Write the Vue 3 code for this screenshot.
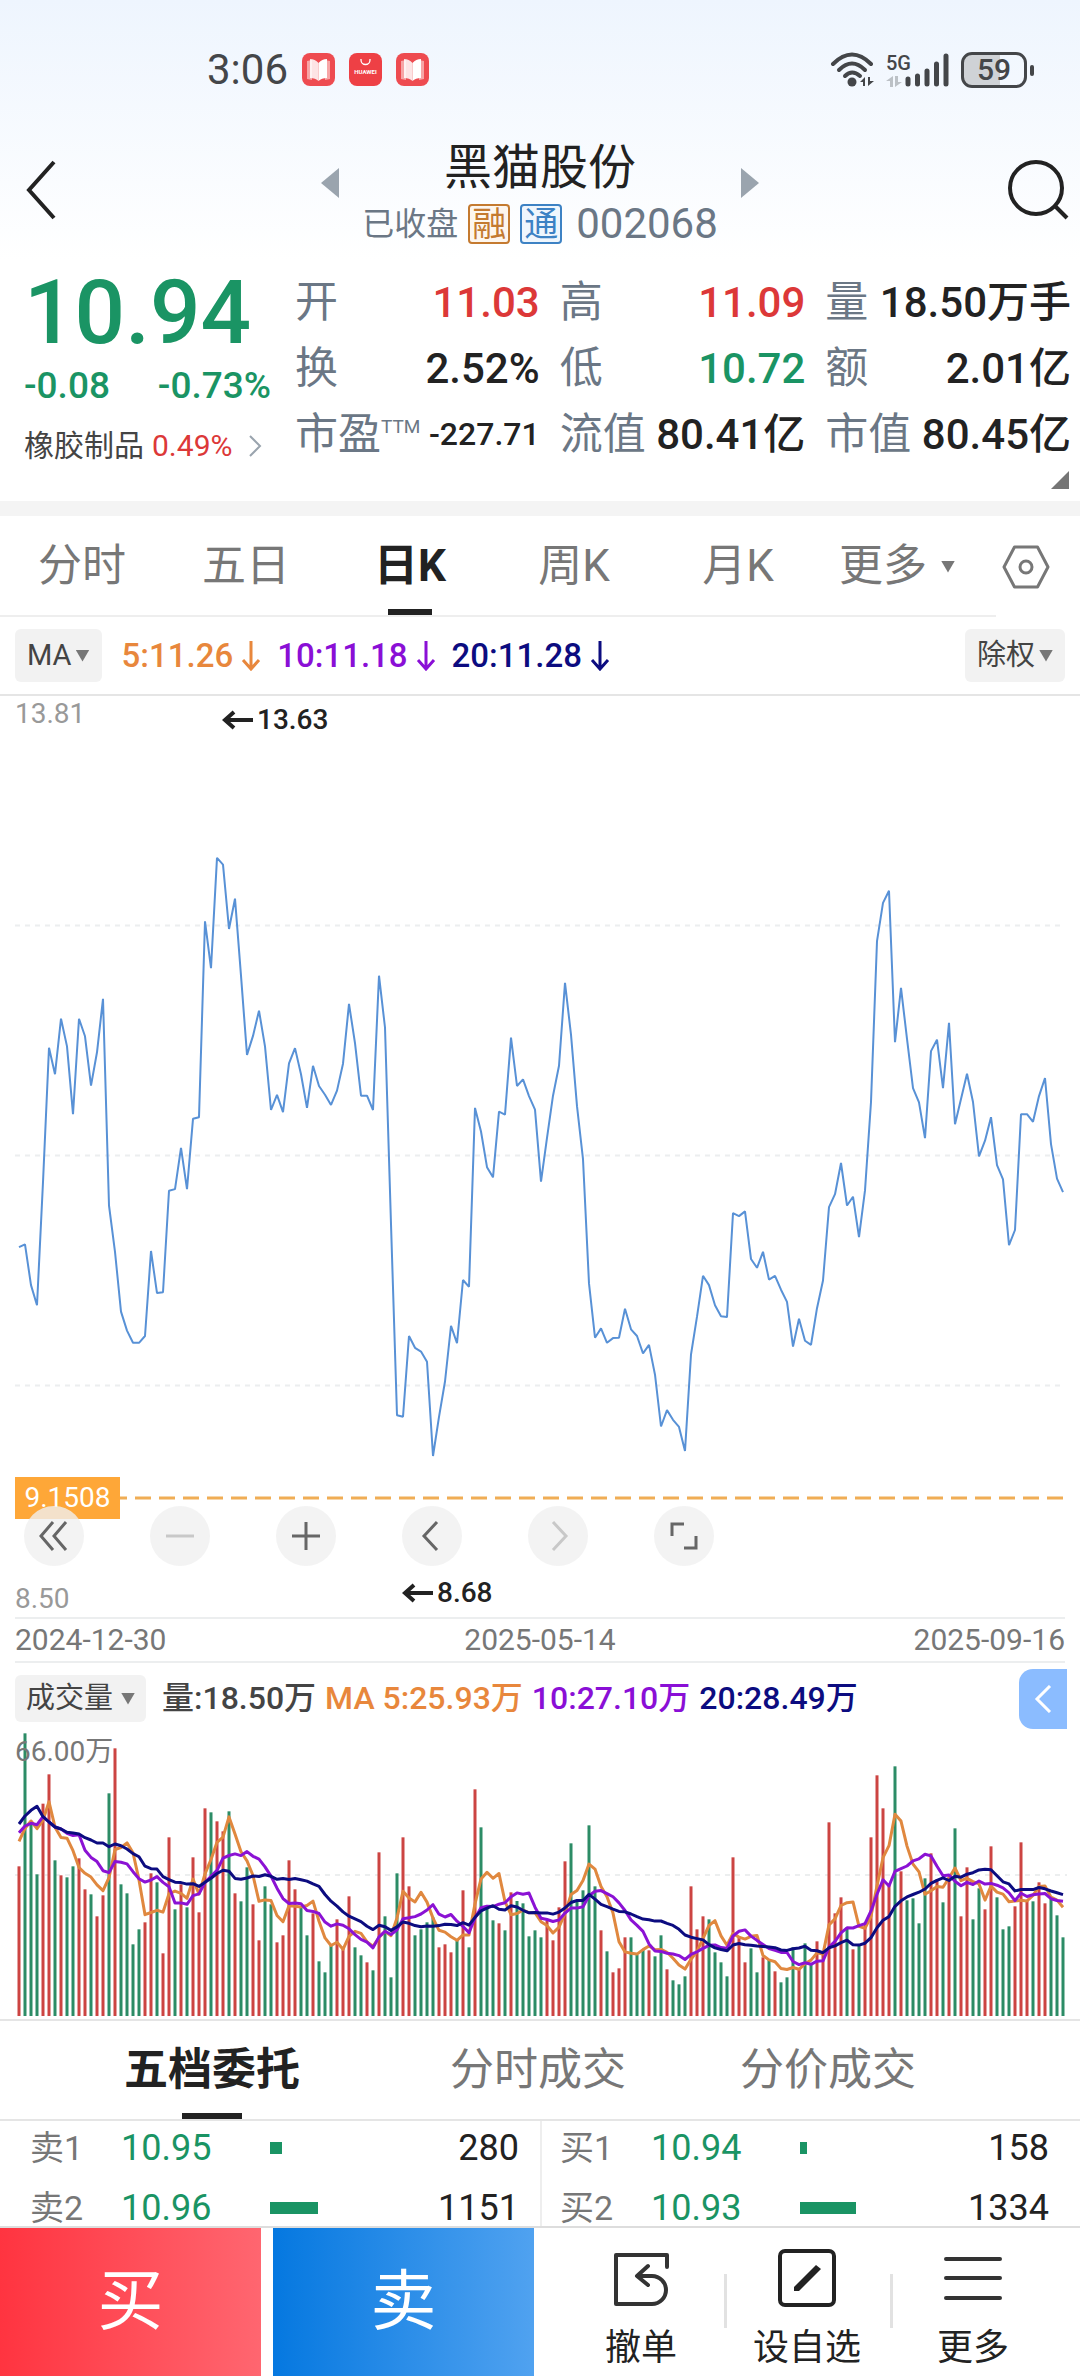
<script setup>
const periods = ['分时', '五日', '日K', '周K', '月K']
const activePeriod = '日K'

const stats = [
  { label: '开', value: '11.03', tone: 'up' },
  { label: '高', value: '11.09', tone: 'up' },
  { label: '量', value: '18.50万手' },
  { label: '换', value: '2.52%' },
  { label: '低', value: '10.72', tone: 'down' },
  { label: '额', value: '2.01亿' },
  { label: '市盈', sup: 'TTM', value: '-227.71', small: true },
  { label: '流值', value: '80.41亿' },
  { label: '市值', value: '80.45亿' },
]

const START_X = 19
const STEP = 6

// Closing line: depth below the upper gridline band, in chart sampling units
const closes = [
  1015, 1008, 1105, 1153, 860, 541, 604, 472, 538, 699, 472, 514, 631, 552, 425, 916, 1026, 1168, 1213, 1242,
  1242, 1226, 1024, 1124, 1122, 881, 877, 779, 877, 710, 706, 241, 352, 90, 106, 259, 187, 370, 558, 513,
  453, 538, 689, 653, 694, 578, 542, 604, 684, 584, 632, 653, 677, 643, 579, 437, 530, 655, 655, 689,
  370, 493, 960, 1414, 1418, 1226, 1254, 1263, 1287, 1511, 1418, 1334, 1202, 1243, 1093, 1109, 684, 740, 825, 849,
  693, 700, 517, 632, 616, 656, 688, 859, 755, 655, 584, 387, 510, 680, 806, 1101, 1230, 1208, 1242, 1231,
  1230, 1161, 1210, 1226, 1267, 1247, 1318, 1441, 1402, 1425, 1442, 1499, 1270, 1180, 1083, 1105, 1153, 1179, 1181, 934,
  941, 930, 1043, 1064, 1026, 1092, 1083, 1116, 1145, 1251, 1185, 1237, 1247, 1160, 1094, 920, 889, 815, 916, 895,
  991, 880, 670, 288, 197, 168, 528, 399, 520, 637, 671, 756, 549, 522, 637, 482, 723, 663, 603, 670,
  799, 762, 706, 820, 854, 1010, 974, 699, 699, 717, 656, 613, 770, 852, 884,
]
const closeLine = closes
  .map((v, i) => `${START_X + i * STEP},${(124 + v * 0.4209).toFixed(1)}`)
  .join(' ')

// Volume bars: r = rising day, g = falling day, number = bar top in thirds of a pixel
const volumes = `r469 g70 g340 g493 r281 r193 g451 r496 g502 g469 r445 r538 g553 r619 r556 g250 r115 g523 g550 g703
g658 r637 r490 g517 r730 r382 g598 r523 g592 r442 r607 r295 g307 r334 r364 g304 r550 g574 g472 r583
r691 g529 g583 r697 r676 r451 r538 g592 g676 r610 g754 g787 g706 r628 r715 r559 g712 g736 r757 g781
r427 g619 g802 g490 r382 r529 g676 g658 g637 g622 r712 r703 r727 g690 r541 g712 r238 g352 g592 g631
r640 g661 r547 g573 g580 g679 g661 g682 r632 r691 r592 r454 g400 g571 g541 g346 g529 r661 g724 r787
r775 r682 g682 g735 g720 r721 g739 g676 r778 g811 g823 g799 r529 r658 r619 g628 g727 g757 g799 r442
r682 r757 g715 g787 r742 g748 r784 g817 g802 g712 r775 g700 g763 r694 r730 r337 r610 r562 g652 r718
g703 r640 r382 r196 r295 r523 g169 r484 g571 g565 g640 g505 r430 r508 g577 r500 g355 r619 r472 g628
g535 r598 r409 g562 g658 g649 r589 r397 r571 g574 r517 r580 g565 g616 g682`
  .split(/\s+/)
  .map((s) => ({ rising: s[0] === 'r', top: Number(s.slice(1)) }))

const BASE = 283
const toY = (v) => (v - 69) / 3
const bars = volumes.map((v, i) => ({
  x: START_X + i * STEP - 1.5,
  y: toY(v.top),
  h: BASE - toY(v.top),
  rising: v.rising,
}))

// Moving averages start from known history, then follow the bars
function average(days, history) {
  return volumes
    .map((_, i) => {
      let v = history[i]
      if (v === undefined) {
        const part = volumes.slice(i - days + 1, i + 1)
        v = part.reduce((sum, d) => sum + d.top, 0) / days
      }
      return `${START_X + i * STEP},${toY(v).toFixed(1)}`
    })
    .join(' ')
}
const ma5 = average(5, [394, 355, 333, 356])
const ma10 = average(10, [368, 348, 340, 344, 320, 336, 351, 357, 370])
const ma20 = average(20, [342, 318, 301, 289, 320, 336, 351, 357, 367, 369, 372, 383, 390, 399, 399, 410, 402, 407, 417])

const books = [
  {
    name: '卖盘',
    rows: [
      { label: '卖1', price: '10.95', bar: 12, qty: '280' },
      { label: '卖2', price: '10.96', bar: 48, qty: '1151' },
    ],
  },
  {
    name: '买盘',
    rows: [
      { label: '买1', price: '10.94', bar: 7, qty: '158' },
      { label: '买2', price: '10.93', bar: 56, qty: '1334' },
    ],
  },
]
</script>

<template>
  <div class="page">
    <div class="status">
      <div class="status-left">
        <span class="clock">3:06</span>
        <template v-for="n in 3" :key="n">
          <svg v-if="n !== 2" class="app-icon" viewBox="0 0 33 33">
            <rect width="33" height="33" rx="8" fill="#ee4b50" />
            <path d="M5 8l5-1v20l-5-1zM28 8l-5-1v20l5-1z" fill="#f7a5a6" />
            <path d="M8 6q5 0 8.500 4v18q-3-3-8.500-3z" fill="#fff" opacity=".85" />
            <path d="M25 6q-5 0-8.500 4v18q3-3 8.500-3z" fill="#fff" />
          </svg>
          <svg v-else class="app-icon" viewBox="0 0 33 33">
            <rect width="33" height="33" rx="8" fill="#ee4045" />
            <path d="M12 6v1a4.500 4.500 0 0 0 9 0V6" fill="none" stroke="#fff" stroke-width="1.300" />
            <text x="16.500" y="21" font-size="6" font-weight="700" fill="#fff" text-anchor="middle">HUAWEI</text>
          </svg>
        </template>
      </div>
      <div class="status-right">
        <svg width="45" height="36" viewBox="0 0 45 36">
          <g fill="none" stroke="#444649" stroke-width="4" stroke-linecap="round">
            <path d="M3 12Q22 -7 41 12" />
            <path d="M9 18Q22 5 35 18" />
            <path d="M15 24Q22 17 30 24" />
          </g>
          <circle cx="22" cy="30" r="4.500" fill="#444649" />
          <path d="M30 30l5-5v9h-2v-4zM44 29l-6 5v-9h2v4z" fill="#444649" />
        </svg>
        <div class="net">
          <span>5G</span>
          <svg width="16" height="11" viewBox="0 0 16 11"><path d="M0 5l7-5v11H4V5zM16 6l-7 5V0h3v6z" fill="#bcc1c6" /></svg>
        </div>
        <svg class="signal" width="44" height="34" viewBox="0 0 44 34">
          <g stroke="#444649" stroke-width="5" stroke-linecap="round">
            <path d="M3 26v5M12.500 23v8M22 18v13M31.500 11v20M41 3v28" />
          </g>
        </svg>
        <div class="battery"><span>59</span></div>
        <i class="nub"></i>
      </div>
    </div>

    <header class="head">
      <button class="plain" aria-label="返回">
        <svg width="30" height="60" viewBox="0 0 30 60"><path d="M28 2L3 30l25 28" fill="none" stroke="#222" stroke-width="4" /></svg>
      </button>
      <div class="stock">
        <button class="plain arrow" aria-label="上一只"><svg width="18" height="30" viewBox="0 0 18 30"><path d="M18 0v30L0 15z" fill="#9aa4ae" /></svg></button>
        <div class="title">
          <h1>黑猫股份</h1>
          <div class="sub">
            <span>已收盘</span>
            <span class="tag rong">融</span>
            <span class="tag tong">通</span>
            <span class="code">002068</span>
          </div>
        </div>
        <button class="plain arrow" aria-label="下一只"><svg width="18" height="30" viewBox="0 0 18 30"><path d="M0 0v30l18-15z" fill="#9aa4ae" /></svg></button>
      </div>
      <button class="plain search" aria-label="搜索">
        <svg width="62" height="60" viewBox="0 0 62 60"><circle cx="28" cy="28" r="26" fill="none" stroke="#222" stroke-width="4" /><path d="M47 46l12 12" stroke="#222" stroke-width="4" /></svg>
      </button>
    </header>

    <section class="quote">
      <div class="last">
        <div class="price">10.94</div>
        <div class="change"><span>-0.08</span><span>-0.73%</span></div>
        <a class="sector" href="#">
          橡胶制品 <b>0.49%</b>
          <svg width="14" height="22" viewBox="0 0 14 22"><path d="M2 1l10 10L2 21" fill="none" stroke="#9aa4ae" stroke-width="2" /></svg>
        </a>
      </div>
      <dl class="stats">
        <div v-for="s in stats" :key="s.label">
          <dt>{{ s.label }}<sup v-if="s.sup">{{ s.sup }}</sup></dt>
          <dd :class="[s.tone, { small: s.small }]">{{ s.value }}</dd>
        </div>
      </dl>
      <i class="corner"></i>
    </section>

    <nav class="periods">
      <div class="period-list">
        <button v-for="p in periods" :key="p" :class="{ active: p === activePeriod }">{{ p }}</button>
        <button class="more">更多<i class="tri"></i></button>
      </div>
      <button class="plain gear" aria-label="设置">
        <svg width="48" height="44" viewBox="0 0 48 44"><path d="M12.500 2h23L46 22 35.500 42h-23L2 22z" fill="none" stroke="#777" stroke-width="3" stroke-linejoin="round" /><circle cx="24" cy="22" r="6" fill="none" stroke="#777" stroke-width="3" /></svg>
      </button>
    </nav>

    <div class="ma">
      <button class="chip">MA<i class="tri"></i></button>
      <span v-for="m in [['5:11.26', 'c5'], ['10:11.18', 'c10'], ['20:11.28', 'c20']]" :key="m[0]" class="ma-item" :class="m[1]">
        {{ m[0] }}
        <svg width="20" height="30" viewBox="0 0 20 30"><path d="M10 0v27M2 19l8 9 8-9" fill="none" stroke="currentColor" stroke-width="3" /></svg>
      </span>
      <button class="chip right">除权<i class="tri"></i></button>
    </div>

    <section class="chart">
      <svg class="plot" viewBox="0 0 1080 921">
        <path d="M15 229.500H1065M15 459.500H1065M15 689.500H1065" stroke="#eceeef" stroke-width="2" stroke-dasharray="5 5" />
        <path d="M111 802H1065" stroke="#f0ad55" stroke-width="3" stroke-dasharray="16 8" />
        <polyline :points="closeLine" fill="none" stroke="#5891d6" stroke-width="2" stroke-linejoin="bevel" />
      </svg>
      <span class="axis top">13.81</span>
      <span class="axis bottom">8.50</span>
      <span class="mark high"><svg width="32" height="20" viewBox="0 0 32 20"><path d="M12 2L3 10l9 8M3 10h28" fill="none" stroke="#222" stroke-width="4" /></svg>13.63</span>
      <span class="mark low"><svg width="32" height="20" viewBox="0 0 32 20"><path d="M12 2L3 10l9 8M3 10h28" fill="none" stroke="#222" stroke-width="4" /></svg>8.68</span>
      <span class="level">9.1508</span>
      <div class="tools">
        <button aria-label="展开"><svg viewBox="0 0 60 60"><path d="M29 16L17 30l12 14M42 16L30 30l12 14" /></svg></button>
        <button aria-label="缩小" disabled><svg viewBox="0 0 60 60"><path d="M16 30h28" /></svg></button>
        <button aria-label="放大"><svg viewBox="0 0 60 60"><path d="M16 30h28M30 16v28" /></svg></button>
        <button aria-label="左移"><svg viewBox="0 0 60 60"><path d="M35 16L22 30l13 14" /></svg></button>
        <button aria-label="右移" disabled><svg viewBox="0 0 60 60"><path d="M25 16l13 14-13 14" /></svg></button>
        <button aria-label="全屏"><svg viewBox="0 0 60 60"><path d="M18 30V18h12M42 30v12H30" /></svg></button>
      </div>
    </section>

    <div class="dates"><time>2024-12-30</time><time>2025-05-14</time><time>2025-09-16</time></div>

    <div class="vol-head">
      <button class="chip">成交量<i class="tri"></i></button>
      <span>量:18.50万</span>
      <span class="c5">MA 5:25.93万</span>
      <span class="c10">10:27.10万</span>
      <span class="c20">20:28.49万</span>
      <button class="drawer" aria-label="展开面板"><svg width="18" height="28" viewBox="0 0 18 28"><path d="M16 1L3 14l13 13" fill="none" stroke="#fff" stroke-width="3" /></svg></button>
    </div>

    <section class="volume">
      <svg class="plot" viewBox="0 0 1080 283">
        <path d="M15 142H1067" stroke="#eceeef" stroke-width="2" stroke-dasharray="5 5" />
        <rect v-for="b in bars" :key="b.x" :x="b.x" :y="b.y" width="3" :height="b.h" :fill="b.rising ? '#cc4442' : '#2c8c66'" />
        <g fill="none" stroke-width="3" stroke-linejoin="round">
          <polyline :points="ma5" stroke="#e0883f" />
          <polyline :points="ma10" stroke="#8b12d4" />
          <polyline :points="ma20" stroke="#0c0c80" />
        </g>
      </svg>
      <span class="peak">66.00万</span>
    </section>

    <nav class="book-tabs">
      <button class="active">五档委托</button>
      <button>分时成交</button>
      <button>分价成交</button>
    </nav>

    <section class="book">
      <table v-for="b in books" :key="b.name" :aria-label="b.name">
        <tbody>
          <tr v-for="r in b.rows" :key="r.label">
            <th scope="row">{{ r.label }}</th>
            <td class="p">{{ r.price }}</td>
            <td class="b"><i :style="{ width: r.bar + 'px' }"></i></td>
            <td class="q">{{ r.qty }}</td>
          </tr>
        </tbody>
      </table>
    </section>

    <footer class="foot">
      <button class="buy">买</button>
      <button class="sell">卖</button>
      <div class="actions">
        <button>
          <svg width="60" height="60" viewBox="0 0 60 60"><path d="M56 19V7H5v49h36a13 13 0 0 0 0-28H27M37 18L26 28l11 9" fill="none" stroke="#333" stroke-width="4" stroke-linejoin="round" stroke-linecap="round" /></svg>
          撤单
        </button>
        <button>
          <svg width="60" height="60" viewBox="0 0 60 60"><rect x="3" y="3" width="54" height="54" rx="5" fill="none" stroke="#222" stroke-width="4" /><path d="M17 39l22-22 5 4-22 22h-5z" fill="#222" /></svg>
          设自选
        </button>
        <button>
          <svg width="60" height="60" viewBox="0 0 60 60"><path d="M3 11h54M3 30h54M3 50h54" stroke="#333" stroke-width="4" stroke-linecap="round" /></svg>
          更多
        </button>
      </div>
    </footer>
  </div>
</template>

<style>
body {
  background: #fff;
}
</style>

<style scoped>
* {
  box-sizing: border-box;
}
.page {
  display: flex;
  flex-direction: column;
  height: 100vh;
  overflow: hidden;
  background: linear-gradient(#eef5fe 0, #fff 260px);
  color: #222;
  font-family: Roboto, "Noto Sans CJK SC", sans-serif;
  line-height: 1.2;
}
.page > * {
  flex: none;
}
button {
  border: 0;
  padding: 0;
  background: none;
  color: inherit;
  font: inherit;
}
svg {
  display: block;
}
.up { color: #dc3838; }
.down { color: #1a9464; }
.c5 { color: #e8873c; }
.c10 { color: #8a0fd6; }
.c20 { color: #0c0c80; }
.tri {
  width: 14px;
  height: 12px;
  background: #777;
  clip-path: polygon(0 0, 100% 0, 50% 100%);
}

.status {
  display: flex;
  justify-content: space-between;
  align-items: center;
  padding: 40px 46px 0 207px;
  height: 100px;
  color: #444649;
}
.status-left {
  display: flex;
  align-items: center;
  gap: 14px;
}
.clock {
  font-size: 42px;
}
.app-icon {
  width: 33px;
  height: 33px;
}
.status-right {
  display: flex;
  align-items: center;
}
.net {
  display: flex;
  flex-direction: column;
  justify-content: space-between;
  height: 34px;
  margin-left: 11px;
  font-size: 20px;
  font-weight: 500;
  line-height: 20px;
}
.signal {
  margin-left: -6px;
}
.battery {
  display: grid;
  place-items: center;
  width: 66px;
  height: 36px;
  margin-left: 12px;
  border: 3px solid #444649;
  border-radius: 11px;
  background: linear-gradient(90deg, #cfd2d6 60%, transparent 60%);
  font-size: 30px;
  font-weight: 500;
  line-height: 30px;
}
.nub {
  width: 4px;
  height: 11px;
  margin-left: 3px;
  border-radius: 2px;
  background: #444649;
}

.head {
  display: flex;
  justify-content: space-between;
  padding: 36px 10px 0 26px;
  height: 160px;
}
.head > .plain {
  align-self: flex-start;
  margin-top: 24px;
}
.stock {
  display: flex;
  justify-content: space-between;
  align-items: flex-start;
  width: 438px;
  margin-left: 16px;
}
.arrow {
  margin-top: 32px;
}
.title {
  display: flex;
  flex-direction: column;
  align-items: center;
}
h1 {
  margin: 0;
  font-size: 48px;
  font-weight: 400;
  line-height: 64px;
}
.sub {
  display: flex;
  align-items: center;
  height: 48px;
  color: #6b7785;
  font-size: 32px;
  white-space: nowrap;
}
.tag {
  display: grid;
  place-items: center;
  width: 42px;
  height: 40px;
  margin-left: 10px;
  border: 2px solid;
  border-radius: 4px;
  font-size: 34px;
  line-height: 36px;
}
.rong { color: #c47a30; background: #fdf6ee; }
.tong { color: #3d82c4; background: #eff6fd; }
.code {
  margin-left: 14px;
  font-size: 42px;
}

.quote {
  position: relative;
  display: flex;
  height: 256px;
  border-bottom: 15px solid #f4f4f4;
}
.last {
  width: 271px;
  margin-right: 24px;
  padding-left: 24px;
  white-space: nowrap;
}
.price {
  padding-top: 2px;
  font-size: 89px;
  font-weight: 500;
  line-height: 102px;
  color: #1a9464;
}
.change {
  display: flex;
  justify-content: space-between;
  font-size: 37px;
  font-weight: 500;
  line-height: 44px;
  color: #1a9464;
}
.sector {
  display: flex;
  align-items: center;
  gap: 8px;
  margin-top: 16px;
  font-size: 30px;
  line-height: 44px;
  color: #444;
  text-decoration: none;
}
.sector b {
  font-weight: 400;
  color: #dc3838;
}
.sector svg {
  margin-left: 8px;
}
.stats {
  flex: 1;
  display: grid;
  grid-template-columns: 243fr 244fr 244fr;
  column-gap: 20px;
  align-content: start;
  margin: 0;
  padding: 9px 9px 0 0;
}
.stats div {
  display: flex;
  justify-content: space-between;
  align-items: baseline;
  height: 66px;
  white-space: nowrap;
}
dt {
  font-size: 43px;
  line-height: 66px;
  color: #6b7785;
}
sup {
  font-size: 19px;
  line-height: 20px;
  vertical-align: 16px;
}
dd {
  margin: 0;
  font-size: 42px;
  font-weight: 500;
  line-height: 66px;
}
dd.small {
  align-self: flex-start;
  font-size: 32px;
}
.corner {
  position: absolute;
  right: 11px;
  bottom: 12px;
  width: 18px;
  height: 18px;
  background: #757575;
  clip-path: polygon(100% 0, 100% 100%, 0 100%);
}

.periods {
  display: grid;
  grid-template-columns: 996fr 84fr;
  height: 101px;
  font-size: 44px;
  color: #777;
}
.period-list {
  display: grid;
  grid-template-columns: repeat(5, 164fr) 176fr;
  padding-top: 2px;
  border-bottom: 2px solid #eee;
}
.period-list button {
  position: relative;
}
.period-list .more {
  display: flex;
  align-items: center;
  justify-content: center;
  gap: 14px;
  padding-right: 22px;
}
.active {
  font-weight: 700;
  color: #222;
}
.period-list .active::after {
  content: "";
  position: absolute;
  left: calc(50% - 22px);
  bottom: 0;
  width: 44px;
  height: 6px;
  background: #222;
}
.gear {
  padding-left: 6px;
}

.ma {
  display: flex;
  align-items: center;
  height: 79px;
  padding: 0 15px;
  border-bottom: 2px solid #e5e5e5;
  font-size: 33px;
  font-weight: 500;
}
.chip {
  display: flex;
  align-items: center;
  justify-content: center;
  gap: 4px;
  height: 53px;
  padding: 0 12px;
  border-radius: 6px;
  background: #f2f2f2;
  color: #444;
  font-size: 29px;
  font-weight: 400;
}
.ma .chip {
  margin-right: 11px;
}
.ma .chip.right {
  margin: 0 0 0 auto;
}
.ma-item {
  display: flex;
  align-items: center;
  gap: 8px;
  padding-left: 9px;
  margin-right: 7px;
}

.chart,
.volume {
  position: relative;
}
.plot {
  width: 100%;
  height: auto;
}
.axis,
.mark,
.level,
.peak {
  position: absolute;
  left: 15px;
  font-size: 28px;
  line-height: 36px;
}
.axis { color: #999; }
.axis.top { top: 0; }
.axis.bottom { bottom: 0; }
.mark {
  display: flex;
  align-items: center;
  gap: 3px;
  font-weight: 500;
}
.mark.high { left: 222px; top: 6px; }
.mark.low { left: 402px; bottom: 6px; }
.level {
  top: 781px;
  width: 105px;
  height: 42px;
  background: #fea738;
  color: #fff;
  line-height: 42px;
  text-align: center;
}
.tools {
  position: absolute;
  left: 24px;
  top: 810px;
  display: flex;
  gap: 66px;
}
.tools button {
  width: 60px;
  height: 60px;
  border-radius: 50%;
  background: rgba(240, 240, 240, 0.8);
}
.tools path {
  fill: none;
  stroke: #666;
  stroke-width: 3;
}
.tools button:disabled path {
  stroke: #c8c8c8;
}

.dates {
  display: flex;
  justify-content: space-between;
  margin: 0 15px;
  height: 46px;
  border: solid #eceeef;
  border-width: 2px 0;
  color: #777;
  font-size: 30px;
  line-height: 42px;
}

.vol-head {
  display: flex;
  align-items: center;
  gap: 9px;
  height: 70px;
  padding: 1px 13px 0 15px;
  font-size: 32px;
  font-weight: 500;
  color: #444;
  white-space: nowrap;
}
.vol-head .c5 { color: #e8873c; }
.vol-head .c10 { color: #8a0fd6; }
.vol-head .c20 { color: #0c0c80; }
.vol-head .chip {
  height: 47px;
  gap: 8px;
  padding: 0 11px;
  margin-right: 7px;
}
.drawer {
  display: grid;
  place-items: center;
  width: 48px;
  height: 60px;
  margin-left: auto;
  border-radius: 14px 0 0 14px;
  background: #8bbcff;
}
.volume {
  padding-bottom: 3px;
  border-bottom: 2px solid #e5e5e5;
}
.peak {
  top: 1px;
  color: #777;
}

.book-tabs {
  display: grid;
  grid-template-columns: 424fr 228fr 352fr 76fr;
  height: 100px;
  border-bottom: 2px solid #e5e5e5;
  font-size: 44px;
  color: #777;
}
.book-tabs button {
  position: relative;
  white-space: nowrap;
}
.book-tabs .active::after {
  content: "";
  position: absolute;
  left: calc(50% - 30px);
  bottom: 0;
  width: 60px;
  height: 6px;
  background: #222;
}

.page > .book {
  flex: 1 1 0;
  min-height: 0;
  display: grid;
  grid-template-columns: 1fr 1fr;
  align-items: start;
}
table {
  width: 100%;
  table-layout: fixed;
  border-collapse: collapse;
  font-size: 36px;
}
table + table {
  border-left: 2px solid #eee;
}
tr {
  height: 60px;
}
th,
td {
  padding: 9px 0 0;
  text-align: left;
  vertical-align: top;
  font-weight: 400;
  line-height: 36px;
}
th {
  width: 121px;
  padding-left: 30px;
  color: #777;
  font-size: 34px;
}
table + table th {
  width: 110px;
  padding-left: 18px;
}
.p {
  width: 149px;
  color: #1a9464;
}
.b i {
  display: block;
  height: 12px;
  margin-top: 12px;
  background: #1a9464;
}
.q {
  padding-right: 21px;
  text-align: right;
}
table + table .q {
  padding-right: 31px;
}

.foot {
  position: relative;
  display: grid;
  grid-template-columns: 261fr 12fr 261fr 546fr;
  height: 150px;
  border-top: 2px solid #ddd;
  background: #fff;
}
.buy,
.sell {
  color: #fff;
  font-size: 66px;
}
.buy {
  background: linear-gradient(90deg, #ff3440, #ff6670);
}
.sell {
  grid-column: 3;
  background: linear-gradient(90deg, #0578e0, #50a2f0);
}
.actions {
  display: flex;
  padding: 0 24px;
  font-size: 36px;
}
.actions button {
  position: relative;
  flex: 1;
  display: flex;
  flex-direction: column;
  align-items: center;
  padding-top: 20px;
  line-height: 52px;
  gap: 14px;
}
.actions button + button::before {
  content: "";
  position: absolute;
  left: 0;
  top: 46px;
  width: 3px;
  height: 54px;
  background: #e2e2e2;
}
</style>
